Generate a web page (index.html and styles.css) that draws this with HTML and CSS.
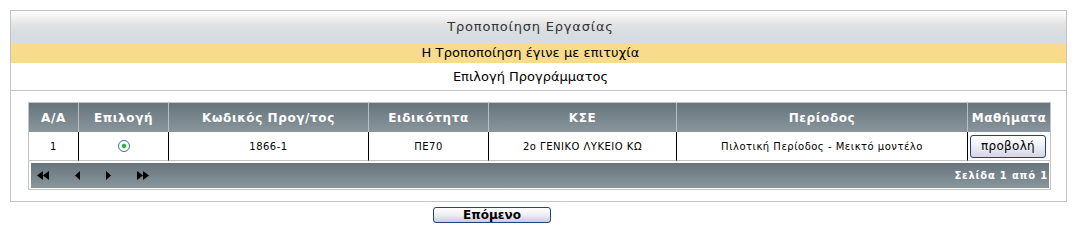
FILE: index.html
```html
<!DOCTYPE html>
<html lang="el">
<head>
<meta charset="utf-8">
<title>Τροποποίηση Εργασίας</title>
<link rel="stylesheet" href="styles.css">
</head>
<body>
<div class="panel">
  <div class="panel-title">Τροποποίηση Εργασίας</div>
  <div class="panel-msg">Η Τροποποίηση έγινε με επιτυχία</div>
  <div class="panel-sub">Επιλογή Προγράμματος</div>
  <div class="panel-body">
    <table class="grid">
      <colgroup>
        <col class="c-aa"><col class="c-sel"><col class="c-code"><col class="c-spec"><col class="c-kse"><col class="c-per"><col class="c-mat">
      </colgroup>
      <thead>
        <tr>
          <th>A/A</th>
          <th>Επιλογή</th>
          <th>Κωδικός Προγ/τος</th>
          <th>Ειδικότητα</th>
          <th>ΚΣΕ</th>
          <th>Περίοδος</th>
          <th>Μαθήματα</th>
        </tr>
      </thead>
      <tbody>
        <tr>
          <td>1</td>
          <td><input class="radio" type="radio" name="prog" checked></td>
          <td>1866-1</td>
          <td>ΠΕ70</td>
          <td>2ο ΓΕΝΙΚΟ ΛΥΚΕΙΟ ΚΩ</td>
          <td>Πιλοτική Περίοδος - Μεικτό μοντέλο</td>
          <td class="cell-btn"><button class="btn-view" type="button">προβολή</button></td>
        </tr>
      </tbody>
      <tfoot>
        <tr>
          <td colspan="7" class="pager-cell">
            <div class="pager">
              <div class="pager-nav">
                <svg width="12" height="9" viewBox="0 0 12 9"><polygon points="6,0 6,9 0,4.5"/><polygon points="12,0 12,9 6,4.5"/></svg>
                <svg width="5" height="9" viewBox="0 0 5 9"><polygon points="5,0 5,9 0,4.5"/></svg>
                <svg width="5" height="9" viewBox="0 0 5 9"><polygon points="0,0 0,9 5,4.5"/></svg>
                <svg width="12" height="9" viewBox="0 0 12 9"><polygon points="0,0 0,9 6,4.5"/><polygon points="6,0 6,9 12,4.5"/></svg>
              </div>
              <div class="pager-info">Σελίδα 1 από 1</div>
            </div>
          </td>
        </tr>
      </tfoot>
    </table>
  </div>
</div>
<div class="actions">
  <button class="btn-next" type="button">Επόμενο</button>
</div>
</body>
</html>
```

FILE: styles.css
```css
html, body {
  margin: 0;
  padding: 0;
  background: #ffffff;
}
body {
  padding: 10px 0 0 10px;
  font-family: "DejaVu Sans", Verdana, sans-serif;
  color: #000;
}
.panel {
  width: 1057px;
  box-sizing: border-box;
  border: 1px solid #c4c4c4;
}
.panel-title {
  height: 32px;
  line-height: 32px;
  text-align: center;
  padding-right: 16px;
  font-size: 13px;
  letter-spacing: 0.8px;
  color: #333333;
  background: linear-gradient(#ffffff 0%, #e4e4e4 40%, #d6dde1 70%, #d3dde2 100%);
}
.panel-msg {
  height: 20px;
  line-height: 20px;
  text-align: center;
  padding-right: 16px;
  font-size: 13px;
  letter-spacing: 0.1px;
  background: #f8dc8b;
}
.panel-sub {
  height: 27px;
  line-height: 27px;
  text-align: center;
  padding-right: 16px;
  font-size: 13px;
  border-bottom: 1px solid #c4c4c4;
}
.panel-body {
  padding: 11px 15px 11px 17px;
}
.grid {
  width: 1023px;
  table-layout: fixed;
  border-collapse: separate;
  border-spacing: 0;
  border: 1px solid #c4c4c4;
}
.c-aa { width: 49px; }
.c-sel { width: 90px; }
.c-code { width: 200px; }
.c-spec { width: 120px; }
.c-kse { width: 188px; }
.c-per { width: 291px; }
.c-mat { width: 83px; }
.grid th {
  height: 29px;
  padding: 0;
  font-size: 12px;
  font-weight: bold;
  letter-spacing: 0.6px;
  color: #ffffff;
  text-align: center;
  white-space: nowrap;
  background: linear-gradient(#67747c, #8a969c);
  border-left: 1px solid #b8bec2;
}
.grid th:first-child {
  border-left: none;
}
.grid tbody td {
  height: 28px;
  padding: 0;
  font-size: 10px;
  letter-spacing: 0.5px;
  text-align: center;
  white-space: nowrap;
  border-left: 1px solid #000;
  border-bottom: 1px solid #c4c4c4;
}
.grid tbody td:first-child {
  border-left: none;
}
.radio {
  appearance: none;
  -webkit-appearance: none;
  display: inline-block;
  vertical-align: middle;
  margin: 0;
  width: 12px;
  height: 12px;
  box-sizing: border-box;
  border: 1px solid #3d6a9c;
  border-radius: 50%;
  background: radial-gradient(circle, #2fb43a 0, #2fb43a 1.7px, #d9ead9 2.5px, #ffffff 3.4px);
}
.cell-btn {
  text-align: right;
}
.btn-view {
  width: 76px;
  height: 23px;
  margin-right: 2px;
  padding: 0;
  font-family: "DejaVu Sans", Verdana, sans-serif;
  font-size: 12px;
  letter-spacing: 0.3px;
  color: #000;
  border: 1px solid #24427a;
  border-radius: 3px;
  background: linear-gradient(#ffffff, #f2f2f7 40%, #d3d5e6);
  vertical-align: middle;
}
.pager-cell {
  padding: 2px 1px 1px 2px;
}
.pager {
  height: 25px;
  display: flex;
  align-items: center;
  justify-content: space-between;
  background: linear-gradient(#67747c, #8a969c);
}
.pager-nav {
  display: flex;
  align-items: center;
  gap: 26px;
  padding-left: 6px;
}
.pager-nav svg {
  display: block;
  fill: #000;
}
.pager-info {
  padding-right: 1px;
  font-size: 10px;
  font-weight: bold;
  letter-spacing: 0.8px;
  color: #ffffff;
}
.actions {
  padding: 5px 0 0 423px;
}
.btn-next {
  display: block;
  width: 118px;
  height: 16px;
  padding: 0;
  font-family: "DejaVu Sans", Verdana, sans-serif;
  font-size: 12px;
  font-weight: bold;
  color: #000;
  border: 1px solid #24427a;
  border-radius: 3px;
  background: linear-gradient(#ffffff, #eeeef4 50%, #c9cce0);
}
```
